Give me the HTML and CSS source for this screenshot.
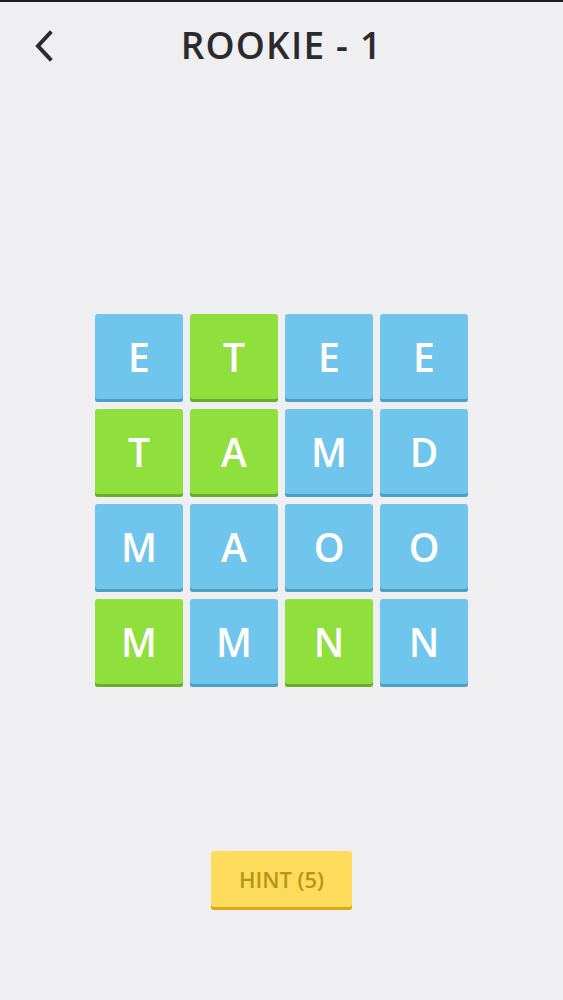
FILE: index.html
```html
<!DOCTYPE html>
<html>
<head>
<meta charset="utf-8">
<link rel="stylesheet" href="styles.css">
</head>
<body>
<div class="screen">
  <header class="header">
    <svg class="back" width="20" height="32" viewBox="0 0 20 32"><path d="M16 3 L4 16 L16 29" fill="none" stroke="#2b2b2d" stroke-width="4" stroke-linecap="square"/></svg>
    <h1 class="title">ROOKIE - 1</h1>
  </header>
  <main class="board">
    <div class="tile blue">E</div>
    <div class="tile green">T</div>
    <div class="tile blue">E</div>
    <div class="tile blue">E</div>
    <div class="tile green">T</div>
    <div class="tile green">A</div>
    <div class="tile blue">M</div>
    <div class="tile blue">D</div>
    <div class="tile blue">M</div>
    <div class="tile blue">A</div>
    <div class="tile blue">O</div>
    <div class="tile blue">O</div>
    <div class="tile green">M</div>
    <div class="tile blue">M</div>
    <div class="tile green">N</div>
    <div class="tile blue">N</div>
  </main>
  <div class="footer">
    <button class="hint">HINT (5)</button>
  </div>
</div>
</body>
</html>
```
FILE: styles.css
```css
html, body {
  margin: 0;
  padding: 0;
  background: #efeef1;
}
.screen {
  width: 563px;
  height: 1000px;
  border-top: 2px solid #1e1e20;
  box-sizing: border-box;
  font-family: "Open Sans", "Liberation Sans", sans-serif;
  display: flex;
  flex-direction: column;
}
.header {
  position: relative;
  height: 84px;
  display: flex;
  align-items: center;
  justify-content: center;
}
.back {
  position: absolute;
  left: 34px;
  top: 28px;
}
.title {
  margin: 0;
  font-size: 37px;
  font-weight: 600;
  color: #2b2b2d;
  letter-spacing: 1.2px;
  padding-left: 0;
}
.board {
  margin: 228px auto 0;
  display: grid;
  grid-template-columns: repeat(4, 88px);
  grid-auto-rows: 88px;
  gap: 7px;
}
.tile {
  border-radius: 3px;
  display: flex;
  align-items: center;
  justify-content: center;
  padding-bottom: 4px;
  box-sizing: border-box;
  color: #fff;
  font-size: 39px;
  font-weight: 600;
}
.blue {
  background: #6fc5eb;
  box-shadow: inset 0 -3px 0 #4e9fc4;
}
.green {
  background: #8fdf3d;
  box-shadow: inset 0 -3px 0 #6aad2a;
}
.footer {
  margin-top: 164px;
  display: flex;
  justify-content: center;
}
.hint {
  width: 141px;
  height: 59px;
  border: none;
  border-radius: 3px;
  background: #fedb5a;
  box-shadow: inset 0 -3px 0 #d9ab1b;
  color: #b59614;
  font-family: "Open Sans", "Liberation Sans", sans-serif;
  font-size: 22px;
  font-weight: 600;
  padding: 0 0 3px;
}
```
